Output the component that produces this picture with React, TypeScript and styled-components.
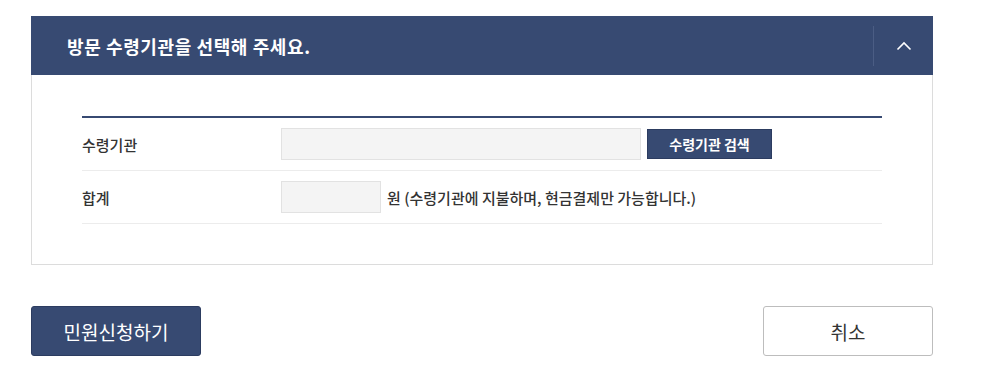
import React from "react";
import styled, { createGlobalStyle } from "styled-components";

const Global = createGlobalStyle`
  html, body { margin: 0; padding: 0; background: #fff; }
  body { font-family: "Noto Sans CJK KR", "Noto Sans", sans-serif; color: #333; }
  * { box-sizing: border-box; }
`;

const Page = styled.div`
  width: 902px;
  margin: 16px 0 0 31px;
`;

const Panel = styled.section``;

const PanelHeader = styled.header`
  height: 59px;
  background: #374a72;
  display: flex;
  align-items: center;
  padding-left: 36px;
`;

const PanelTitle = styled.h2`
  flex: 1;
  margin: 0;
  font-size: 18px;
  font-weight: 700;
  color: #fff;
  letter-spacing: 0.6px;
`;

const ToggleArea = styled.div`
  height: 40px;
  width: 60px;
  border-left: 1px solid #4b5d84;
  display: flex;
  align-items: center;
  justify-content: center;
`;

const PanelBody = styled.div`
  border: 1px solid #dcdcdc;
  border-top: none;
  padding: 41px 50px 40px;
`;

const Table = styled.div`
  border-top: 2px solid #374a72;
`;

const Row = styled.div`
  display: flex;
  align-items: center;
  height: 53px;
  border-bottom: 1px solid #ececec;
`;

const Label = styled.div`
  width: 199px;
  font-size: 15px;
  font-weight: 500;
  color: #333;
`;

const Field = styled.div`
  display: flex;
  align-items: center;
  gap: 6px;
`;

const Input = styled.input<{ $w: number }>`
  width: ${(p) => p.$w}px;
  height: 32px;
  background: #f4f4f4;
  border: 1px solid #e2e2e2;
  outline: none;
  padding: 0 8px;
`;

const SearchButton = styled.button`
  width: 125px;
  height: 30px;
  background: #374a72;
  border: 1px solid #2c3c60;
  color: #fff;
  font-family: inherit;
  font-size: 14px;
  font-weight: 700;
  cursor: pointer;
`;

const Note = styled.span`
  font-size: 15px;
  font-weight: 500;
  color: #333;
`;

const Actions = styled.div`
  display: flex;
  justify-content: space-between;
  margin-top: 41px;
`;

const ActionButton = styled.button<{ $primary?: boolean }>`
  width: 170px;
  height: 50px;
  border-radius: 3px;
  font-family: inherit;
  font-size: 19px;
  cursor: pointer;
  background: ${(p) => (p.$primary ? "#374a72" : "#fff")};
  color: ${(p) => (p.$primary ? "#fff" : "#333")};
  border: 1px solid ${(p) => (p.$primary ? "#2c3c60" : "#bdbdbd")};
`;

export default function App() {
  return (
    <>
      <Global />
      <Page>
        <Panel>
          <PanelHeader>
            <PanelTitle>방문 수령기관을 선택해 주세요.</PanelTitle>
            <ToggleArea>
              <svg width="16" height="10" viewBox="0 0 16 10">
                <path d="M1.5 8.5 L8 2 L14.5 8.5" fill="none" stroke="#fff" strokeWidth="1.6" />
              </svg>
            </ToggleArea>
          </PanelHeader>
          <PanelBody>
            <Table>
              <Row>
                <Label>수령기관</Label>
                <Field>
                  <Input $w={360} readOnly />
                  <SearchButton>수령기관 검색</SearchButton>
                </Field>
              </Row>
              <Row>
                <Label>합계</Label>
                <Field>
                  <Input $w={100} readOnly />
                  <Note>원 (수령기관에 지불하며, 현금결제만 가능합니다.)</Note>
                </Field>
              </Row>
            </Table>
          </PanelBody>
        </Panel>
        <Actions>
          <ActionButton $primary>민원신청하기</ActionButton>
          <ActionButton>취소</ActionButton>
        </Actions>
      </Page>
    </>
  );
}
